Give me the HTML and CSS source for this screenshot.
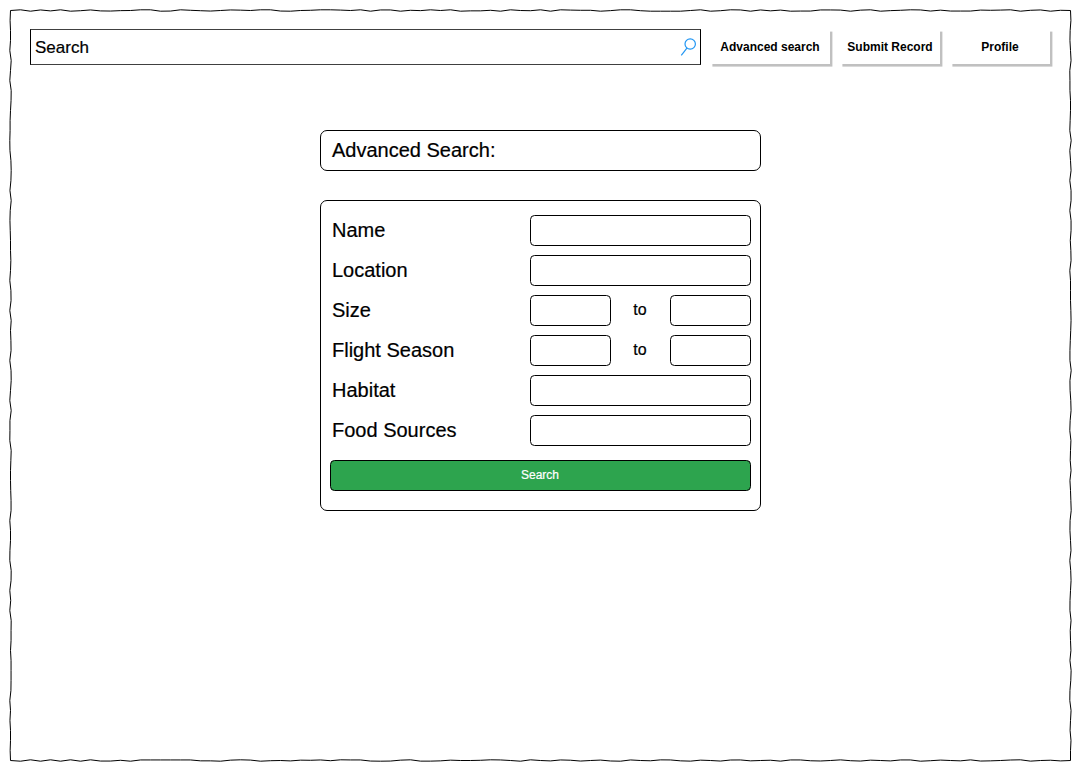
FILE: index.html
```html
<!DOCTYPE html>
<html lang="en">
<head>
<meta charset="utf-8">
<title>Advanced Search</title>
<link rel="stylesheet" href="styles.css">
</head>
<body>
<div class="page">
  <svg class="frame" width="1081" height="771" aria-hidden="true"><path id="outline" fill="none" stroke="#000"/></svg>
  <header class="topbar">
    <div class="searchbox">
      <span>Search</span>
      <svg class="lens" width="17" height="19" viewBox="0 0 17 19" fill="none" stroke="#2196f3" stroke-width="1.2"><circle cx="10.2" cy="7" r="5.2"/><path d="M6.9 11.1 L1.3 18.3"/></svg>
    </div>
    <nav class="nav">
      <a class="tab tab-wide">Advanced search</a>
      <a class="tab">Submit Record</a>
      <a class="tab">Profile</a>
    </nav>
  </header>
  <main class="content">
    <h1 class="title">Advanced Search:</h1>
    <form class="panel">
      <div class="row"><label>Name</label><div class="field"></div></div>
      <div class="row"><label>Location</label><div class="field"></div></div>
      <div class="row"><label>Size</label><div class="range"><div class="field"></div><span class="to">to</span><div class="field"></div></div></div>
      <div class="row"><label>Flight Season</label><div class="range"><div class="field"></div><span class="to">to</span><div class="field"></div></div></div>
      <div class="row"><label>Habitat</label><div class="field"></div></div>
      <div class="row"><label>Food Sources</label><div class="field"></div></div>
      <div class="submit">Search</div>
    </form>
  </main>
</div>
<script src="frame.js"></script>
</body>
</html>
```
FILE: styles.css
```css
* { box-sizing: border-box; }
body { margin: 0; background: #fff; color: #000; font-family: "Liberation Sans", Arial, Helvetica, sans-serif; -webkit-text-stroke: 0.2px; }
.page { position: relative; width: 1081px; height: 771px; overflow: hidden; padding: 29px 29px 0 30px; }
.frame { position: absolute; left: 0; top: 0; pointer-events: none; }
.topbar { display: flex; gap: 9px; height: 38px; }
.searchbox { width: 671px; height: 36px; border: 1px solid #000; border-top-color: #404040; border-bottom-color: #404040; display: flex; justify-content: space-between; padding: 0 3px 0 4px; font-size: 17px; line-height: 35px; }
.lens { margin-top: 7px; }
.nav { display: flex; gap: 10px; }
.tab { width: 100px; height: 35px; background: #fff; font-size: 12px; font-weight: bold; line-height: 36px; text-align: center; white-space: nowrap; box-shadow: 2.4px 2.6px 0 #c0c0c0; -webkit-text-stroke: 0; }
.tab-wide { width: 120px; }
.content { width: 441px; margin: 63px 0 0 290px; }
.title { margin: 0 0 29px; height: 41px; border: 1px solid #000; border-radius: 7px; padding-left: 11px; font-size: 20px; font-weight: normal; line-height: 39px; }
.panel { height: 311px; border: 1px solid #000; border-radius: 7px; padding: 14px 9px 0; }
.row { display: grid; grid-template-columns: 1fr 221px; height: 31px; margin-bottom: 9px; }
.row label { padding-left: 2px; font-size: 20px; line-height: 30px; }
.field { height: 31px; border: 1px solid #000; border-radius: 4.5px; }
.range { display: grid; grid-template-columns: 81px 59px 81px; }
.to { padding-right: 1px; font-size: 16px; line-height: 29px; text-align: center; }
.submit { height: 31px; margin-top: 14px; border: 1px solid #000; border-radius: 4.5px; padding-right: 1px; background: #2da44e; color: #fff; font-size: 12px; line-height: 29px; text-align: center; }
```
FILE: frame.js
```javascript
// Sideways wobble of each edge, in tenths of a pixel, one value per 10px step.
const top_ = [0,-10,10,-8,6,-10,10,3,-8,6,8,2,0,-10,-10,10,8,-10,-3,3,8,0,-8,-5,0,-10,-10,8,10,0,-3,-10,-10,-6,0,-10,10,-8,-8,10,-3,2,-10,0,-10,10,5,5,-3,10,-10,0,3,-10,10,-10,-6,-3,-3,10,2,-10,-10,3,10,10,10,10,0,-10,10,3,-10,-8,10,-8,5,-6,10,8,8,-8,-8,-6,10,-5,-10,10,2,-3,-10,-8,8,-5,8,8,8,-6,-3,-6,-10,10,-3,-8,10,-3,0];
const right = [0,6,-5,-8,0,8,-10,-8,-8,0,0,-5,-10,10,-10,0,8,-10,8,8,-10,8,8,-3,5,8,-10,0,0,0,5,8,3,-3,-8,-8,10,-8,-6,4,8,-5,-10,6,0,-4,8,-8,0,5,10,-6,-8,0,7,-10,3,8,0,-7,-8,8,-4,0,6,-8,9,4,-8,-10,8,0,-6,7,0,0];
const bottom = [0,10,-10,10,-10,10,-10,10,-10,8,8,-3,10,-8,-8,-8,-8,-8,-8,5,5,10,-5,-10,-6,10,3,0,6,-5,-3,-8,3,-10,-8,-8,8,10,8,-5,-10,9,9,5,-5,0,0,-3,-10,-8,0,10,-10,0,6,-8,-4,8,0,-6,7,10,-8,0,4,-9,-8,5,9,-5,0,8,-7,-8,5,0,-4,9,-8,-8,4,7,0,-9,3,8,-5,0,6,-8,-8,10,3,-6,0,5,-9,8,5,0,-7,-10,9,0,-4,6,0];
const left = [0,-6,0,0,-10,10,0,-10,10,8,0,-6,-6,-10,-8,6,10,6,-8,10,-4,-8,-4,0,0,5,0,-10,6,8,-10,10,0,6,8,-10,8,10,0,-10,10,-8,-8,-10,10,5,0,0,3,8,8,-10,0,0,-8,-10,10,8,-10,3,-10,10,8,8,0,8,8,8,6,-10,0,-8,0,0,-5,0];
const scale = 0.07;
const pts = [
  ...top_.map((d, i) => [10.5 + i * 10, 10.5 + d * scale]),
  ...right.map((d, i) => [1070.5 + d * scale, 10.5 + i * 10]),
  ...bottom.map((d, i) => [10.5 + i * 10, 760.5 + d * scale]).reverse(),
  ...left.map((d, i) => [10.5 + d * scale, 10.5 + i * 10]).reverse()
];
document.getElementById('outline').setAttribute('d', 'M' + pts.map(p => p.join(' ')).join('L') + 'Z');
```
